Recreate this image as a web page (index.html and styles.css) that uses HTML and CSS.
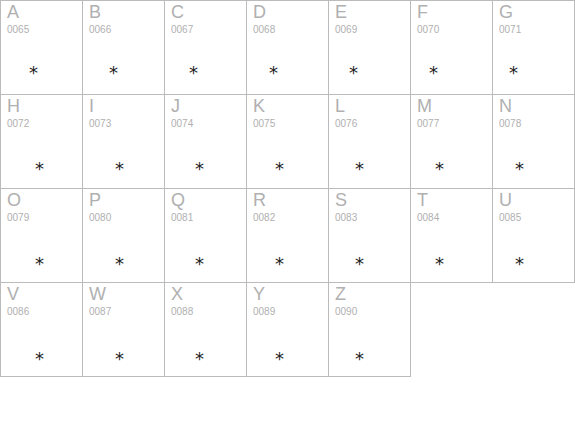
FILE: index.html
```html
<!DOCTYPE html>
<html>
<head>
<meta charset="utf-8">
<link rel="stylesheet" href="styles.css">
</head>
<body>
<div class="grid">
  <div class="cell"><div class="ch">A</div><div class="code">0065</div><div class="glyph">*</div></div>
  <div class="cell"><div class="ch">B</div><div class="code">0066</div><div class="glyph">*</div></div>
  <div class="cell"><div class="ch">C</div><div class="code">0067</div><div class="glyph">*</div></div>
  <div class="cell"><div class="ch">D</div><div class="code">0068</div><div class="glyph">*</div></div>
  <div class="cell"><div class="ch">E</div><div class="code">0069</div><div class="glyph">*</div></div>
  <div class="cell"><div class="ch">F</div><div class="code">0070</div><div class="glyph">*</div></div>
  <div class="cell"><div class="ch">G</div><div class="code">0071</div><div class="glyph">*</div></div>
  <div class="cell"><div class="ch">H</div><div class="code">0072</div><div class="glyph">*</div></div>
  <div class="cell"><div class="ch">I</div><div class="code">0073</div><div class="glyph">*</div></div>
  <div class="cell"><div class="ch">J</div><div class="code">0074</div><div class="glyph">*</div></div>
  <div class="cell"><div class="ch">K</div><div class="code">0075</div><div class="glyph">*</div></div>
  <div class="cell"><div class="ch">L</div><div class="code">0076</div><div class="glyph">*</div></div>
  <div class="cell"><div class="ch">M</div><div class="code">0077</div><div class="glyph">*</div></div>
  <div class="cell"><div class="ch">N</div><div class="code">0078</div><div class="glyph">*</div></div>
  <div class="cell"><div class="ch">O</div><div class="code">0079</div><div class="glyph">*</div></div>
  <div class="cell"><div class="ch">P</div><div class="code">0080</div><div class="glyph">*</div></div>
  <div class="cell"><div class="ch">Q</div><div class="code">0081</div><div class="glyph">*</div></div>
  <div class="cell"><div class="ch">R</div><div class="code">0082</div><div class="glyph">*</div></div>
  <div class="cell"><div class="ch">S</div><div class="code">0083</div><div class="glyph">*</div></div>
  <div class="cell"><div class="ch">T</div><div class="code">0084</div><div class="glyph">*</div></div>
  <div class="cell"><div class="ch">U</div><div class="code">0085</div><div class="glyph">*</div></div>
  <div class="cell"><div class="ch">V</div><div class="code">0086</div><div class="glyph">*</div></div>
  <div class="cell"><div class="ch">W</div><div class="code">0087</div><div class="glyph">*</div></div>
  <div class="cell"><div class="ch">X</div><div class="code">0088</div><div class="glyph">*</div></div>
  <div class="cell"><div class="ch">Y</div><div class="code">0089</div><div class="glyph">*</div></div>
  <div class="cell"><div class="ch">Z</div><div class="code">0090</div><div class="glyph">*</div></div>
</div>
</body>
</html>
```
FILE: styles.css
```css
html, body {
  margin: 0;
  padding: 0;
  background: #fff;
}

.grid {
  display: grid;
  grid-template-columns: repeat(7, 82px);
  grid-auto-rows: 94px;
  width: 575px;
  box-sizing: border-box;
  border-left: 1px solid #bbbbbb;
  border-top: 1px solid #bbbbbb;
  font-family: "Liberation Sans", Arial, sans-serif;
}

.cell {
  box-sizing: border-box;
  border-right: 1px solid #bbbbbb;
  border-bottom: 1px solid #bbbbbb;
  padding: 2px 0 0 6px;
}

.ch {
  font-size: 18px;
  line-height: 18px;
  color: #b0b0b0;
}

.code {
  margin-top: 4px;
  font-size: 10px;
  line-height: 10px;
  color: #b0b0b0;
}

.glyph {
  font-family: "DejaVu Sans", sans-serif;
  font-size: 18px;
  line-height: 18px;
  color: #222;
  margin-top: 29px;
  padding-left: 22px;
  --col: 0px;
  margin-left: var(--col);
}

.cell:nth-child(7n+2) .glyph { --col: -2px; }
.cell:nth-child(7n+3) .glyph { --col: -4px; }
.cell:nth-child(7n+4) .glyph { --col: -6px; }
.cell:nth-child(7n+5) .glyph { --col: -8px; }
.cell:nth-child(7n+6) .glyph { --col: -10px; }
.cell:nth-child(7n+7) .glyph { --col: -12px; }

.cell:nth-child(n+8) .glyph {
  margin-top: 31px;
  padding-left: 28px;
}
.cell:nth-child(n+15) .glyph {
  margin-top: 32px;
}
.cell:nth-child(n+22) .glyph {
  margin-top: 33px;
}
```
